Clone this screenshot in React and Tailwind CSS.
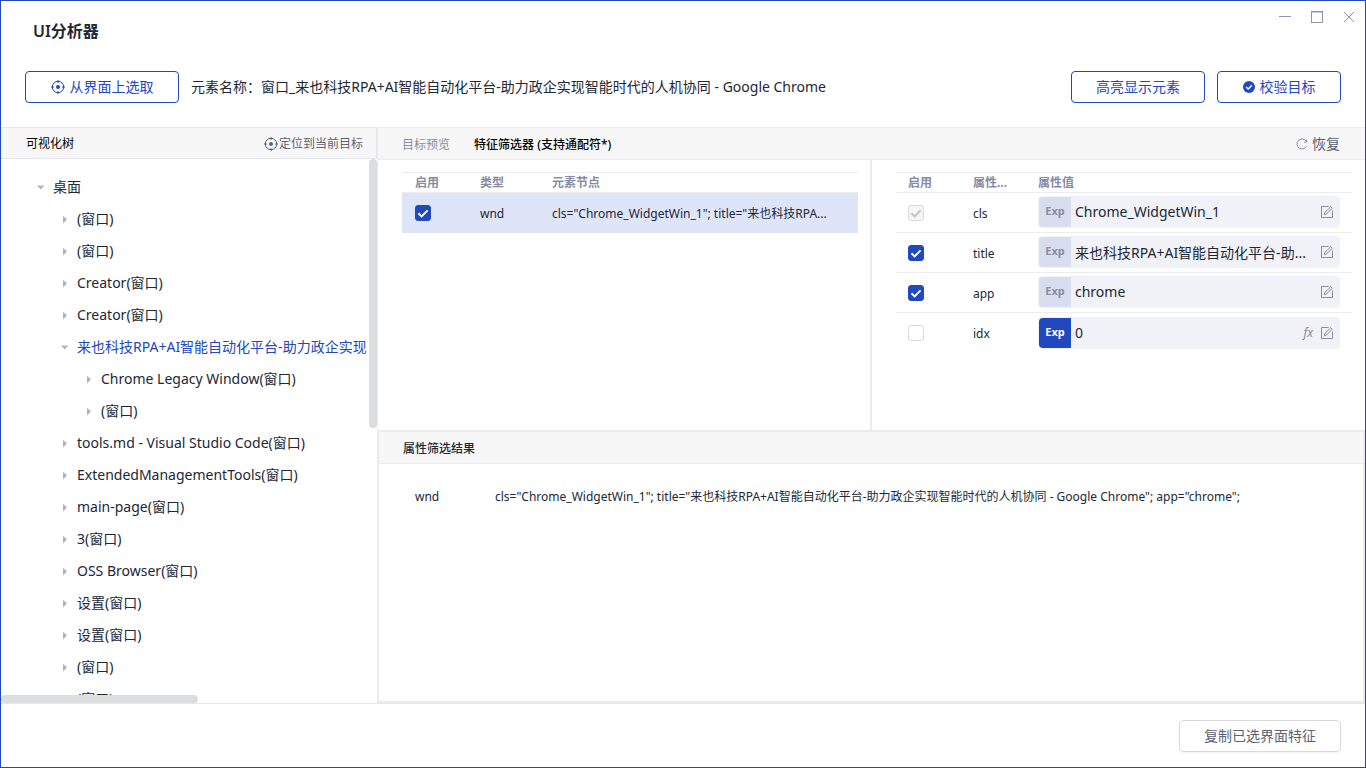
import { useState } from "react";

const treeNodes = [
  { level: 0, label: "桌面", open: true },
  { level: 1, label: "(窗口)" },
  { level: 1, label: "(窗口)" },
  { level: 1, label: "Creator(窗口)" },
  { level: 1, label: "Creator(窗口)" },
  {
    level: 1,
    label: "来也科技RPA+AI智能自动化平台-助力政企实现",
    open: true,
    active: true,
  },
  { level: 2, label: "Chrome Legacy Window(窗口)" },
  { level: 2, label: "(窗口)" },
  { level: 1, label: "tools.md - Visual Studio Code(窗口)" },
  { level: 1, label: "ExtendedManagementTools(窗口)" },
  { level: 1, label: "main-page(窗口)" },
  { level: 1, label: "3(窗口)" },
  { level: 1, label: "OSS Browser(窗口)" },
  { level: 1, label: "设置(窗口)" },
  { level: 1, label: "设置(窗口)" },
  { level: 1, label: "(窗口)" },
  { level: 1, label: "(窗口)" },
];

const indents = ["pl-[35px]", "pl-[59px]", "pl-[83px]"];

const initialAttrs = [
  { name: "cls", value: "Chrome_WidgetWin_1", checked: true, disabled: true },
  { name: "title", value: "来也科技RPA+AI智能自动化平台-助...", checked: true },
  { name: "app", value: "chrome", checked: true },
  { name: "idx", value: "0", checked: false, exp: true },
];

const TargetIcon = () => (
  <svg width="14" height="14" viewBox="0 0 14 14" fill="none" stroke="currentColor" aria-hidden="true">
    <circle cx="7" cy="7" r="5.7" />
    <circle cx="7" cy="7" r="2" fill="currentColor" stroke="none" />
    <path d="M7 0v3M7 11v3M0 7h3M11 7h3" />
  </svg>
);

const CheckCircleIcon = () => (
  <svg width="12" height="12" viewBox="0 0 12 12" fill="none" aria-hidden="true">
    <circle cx="6" cy="6" r="6" fill="currentColor" />
    <path d="M3.2 6.1l2 2L8.9 4.3" stroke="#fff" strokeWidth="1.4" />
  </svg>
);

const RefreshIcon = () => (
  <svg width="12" height="12" viewBox="0 0 12 12" fill="none" stroke="#858ca3" aria-hidden="true">
    <path d="M10.6 8A5 5 0 1 1 10 3" />
    <path d="M10.6 1.6v2.6H8.2" />
  </svg>
);

const EditIcon = () => (
  <svg width="12" height="12" viewBox="0 0 12 12" fill="none" stroke="#858ca3" aria-hidden="true">
    <path d="M7.5.5h-7v11h11v-7" />
    <path d="M3.4 8.6l.4-2L9.8.7l1.5 1.5-5.9 5.9z" />
  </svg>
);

const Caret = ({ open }) => (
  <svg width="9" height="9" viewBox="0 0 9 9" fill="#b0b5c6" aria-hidden="true">
    {open ? <path d="M1 2.5h7.5L4.8 6.5z" /> : <path d="M3 .5v8l4-4z" />}
  </svg>
);

const Checkbox = ({ label, checked, disabled, onChange }) => (
  <span className="grid size-4">
    <input
      type="checkbox"
      aria-label={label}
      checked={checked}
      disabled={disabled}
      onChange={onChange}
      className="peer col-start-1 row-start-1 size-4 appearance-none rounded-[3px] border border-[#d9d9d9] bg-white checked:border-[#2048bf] checked:bg-[#2048bf] disabled:border-[#d9d9d9] disabled:bg-[#f5f5f5]"
    />
    <svg
      viewBox="0 0 16 16"
      fill="none"
      strokeWidth="2"
      aria-hidden="true"
      className="pointer-events-none invisible col-start-1 row-start-1 size-4 stroke-white peer-checked:visible peer-disabled:stroke-[#c3c3c3]"
    >
      <path d="M3.4 8.2l3.2 3.2 6-6" />
    </svg>
  </span>
);

const WindowControls = () => (
  <div className="flex h-8 items-center justify-end gap-5 pr-[10px] text-[#8f96ab]">
    <button type="button" aria-label="最小化">
      <svg width="12" height="12" viewBox="0 0 12 12" stroke="currentColor">
        <path d="M0 5.5h12" />
      </svg>
    </button>
    <button type="button" aria-label="最大化">
      <svg width="12" height="12" viewBox="0 0 12 12" fill="none" stroke="currentColor">
        <rect x=".5" y=".5" width="11" height="11" />
        <path d="M0 1h12" />
      </svg>
    </button>
    <button type="button" aria-label="关闭">
      <svg width="12" height="12" viewBox="0 0 12 12" stroke="currentColor">
        <path d="M1 1l10 10M11 1L1 11" />
      </svg>
    </button>
  </div>
);

const Tree = () => (
  <aside className="flex w-[376px] shrink-0 flex-col">
    <div className="flex h-8 shrink-0 items-center justify-between border-y border-r border-[#e6e7ea] bg-[#f7f7f7] pt-0.5 pr-[13px] pl-[25px] text-xs">
      <h2 className="text-black">可视化树</h2>
      <button type="button" className="flex items-center gap-px text-[#5b6274]">
        <TargetIcon />
        定位到当前目标
      </button>
    </div>
    <div className="flex min-h-0 flex-1">
      <ul className="min-w-0 flex-1 overflow-hidden pt-3">
        {treeNodes.map((node, i) => (
          <li
            key={i}
            className={`flex h-8 items-center gap-2 whitespace-nowrap ${indents[node.level]} ${
              node.active ? "text-[#2048bf]" : "text-[#212735]"
            }`}
          >
            <span className="shrink-0">
              <Caret open={node.open} />
            </span>
            {node.label}
          </li>
        ))}
      </ul>
      <div className="w-2 shrink-0">
        <div className="h-[269px] rounded-full bg-[#dcdddf]" />
      </div>
    </div>
    <div className="h-2 shrink-0">
      <div className="h-2 w-[197px] rounded-full bg-[#dcdddf]" />
    </div>
  </aside>
);

const NodeTable = () => {
  const [enabled, setEnabled] = useState(true);

  return (
    <table className="w-full table-fixed text-left text-xs">
      <colgroup>
        <col className="w-[65px]" />
        <col className="w-[72px]" />
        <col />
      </colgroup>
      <thead>
        <tr className="h-5 border-y border-[#ededed] text-[#858ca3]">
          <th className="pt-px pl-[13px] font-bold">启用</th>
          <th className="pt-px pl-[13px] font-bold">类型</th>
          <th className="pt-px pl-[13px] font-bold">元素节点</th>
        </tr>
      </thead>
      <tbody>
        <tr className="h-10 bg-[#dfe5f9] text-[#212735]">
          <td className="pl-[13px]">
            <Checkbox
              label="启用 wnd"
              checked={enabled}
              onChange={() => setEnabled(!enabled)}
            />
          </td>
          <td className="pt-0.5 pl-[13px]">wnd</td>
          <td className="overflow-hidden pt-0.5 pl-[13px] whitespace-nowrap">
            cls="Chrome_WidgetWin_1"; title="来也科技RPA...
          </td>
        </tr>
      </tbody>
    </table>
  );
};

const AttrTable = () => {
  const [attrs, setAttrs] = useState(initialAttrs);

  const update = (name, changes) => {
    setAttrs(attrs.map((a) => (a.name === name ? { ...a, ...changes } : a)));
  };

  return (
    <table className="w-full table-fixed text-left text-xs">
      <colgroup>
        <col className="w-[65px]" />
        <col className="w-[65px]" />
        <col />
      </colgroup>
      <thead>
        <tr className="h-5 border-y border-[#ededed] text-[#858ca3]">
          <th className="pt-px pl-3 font-bold">启用</th>
          <th className="pt-px pl-3 font-bold">属性...</th>
          <th className="pt-px pl-3 font-bold">属性值</th>
        </tr>
      </thead>
      <tbody>
        {attrs.map((attr) => (
          <tr
            key={attr.name}
            className="group h-10 border-b border-[#ededed] text-[#212735] last:border-0"
          >
            <td className="pl-3">
              <Checkbox
                label={`启用 ${attr.name}`}
                checked={attr.checked}
                disabled={attr.disabled}
                onChange={() => update(attr.name, { checked: !attr.checked })}
              />
            </td>
            <td className="pt-0.5 pl-3">{attr.name}</td>
            <td className="pr-3 pb-0.5 pl-3 group-last:pb-0">
              <div className="flex h-8 items-center rounded-sm bg-[#f1f2f7] pr-[7px] pl-px">
                <button
                  type="button"
                  className={`h-[30px] w-8 shrink-0 rounded-l-sm text-[11px] font-bold ${
                    attr.exp
                      ? "bg-[#2048bf] text-white"
                      : "bg-[#d9deee] text-[#858ca3]"
                  }`}
                >
                  Exp
                </button>
                <input
                  type="text"
                  aria-label={attr.name}
                  value={attr.value}
                  onChange={(e) => update(attr.name, { value: e.target.value })}
                  className="h-8 min-w-0 flex-1 bg-transparent pl-1 text-sm outline-none"
                />
                {attr.exp && (
                  <button
                    type="button"
                    className="mr-2 text-xs text-[#858ca3] italic"
                  >
                    fx
                  </button>
                )}
                <button type="button" aria-label={`编辑 ${attr.name}`}>
                  <EditIcon />
                </button>
              </div>
            </td>
          </tr>
        ))}
      </tbody>
    </table>
  );
};

const App = () => {
  return (
    <div className="flex h-screen flex-col border border-[#2048bf] bg-white font-['Noto_Sans','Noto_Sans_CJK_SC',sans-serif] text-sm text-[#212735]">
      <header className="h-[126px] shrink-0">
        <WindowControls />
        <h1 className="-mt-4 pl-8 text-base leading-7 font-semibold">UI分析器</h1>
        <div className="mt-[26px] flex items-center gap-3 px-6">
          <button
            type="button"
            className="flex h-8 w-[154px] items-center justify-center gap-[5px] rounded-sm border border-[#2048bf] text-[#2048bf]"
          >
            <TargetIcon />
            从界面上选取
          </button>
          <p className="min-w-0 flex-1 truncate">
            元素名称：窗口_来也科技RPA+AI智能自动化平台-助力政企实现智能时代的人机协同 - Google Chrome
          </p>
          <button
            type="button"
            className="h-8 w-[134px] rounded-sm border border-[#2048bf] text-[#2048bf]"
          >
            高亮显示元素
          </button>
          <button
            type="button"
            className="flex h-8 w-[124px] items-center justify-center gap-[5px] rounded-sm border border-[#2048bf] text-[#2048bf]"
          >
            <CheckCircleIcon />
            校验目标
          </button>
        </div>
      </header>

      <div className="flex min-h-0 flex-1">
        <Tree />
        <main className="flex min-w-0 flex-1 flex-col border-l border-[#ebebed]">
          <div className="flex h-[33px] shrink-0 items-center border-y border-[#ededed] bg-[#f7f7f7] pr-[25px] pl-6">
            <nav className="flex flex-1 gap-6 pt-0.5 text-xs">
              <button type="button" className="text-[#858ca3]">
                目标预览
              </button>
              <button type="button" className="font-medium text-black">
                特征筛选器 (支持通配符*)
              </button>
            </nav>
            <button type="button" className="flex items-center gap-1 text-[#5b6274]">
              <RefreshIcon />
              恢复
            </button>
          </div>

          <div className="flex h-[270px] shrink-0 pr-1.5">
            <section className="min-w-0 flex-1 pt-3 pr-3 pl-6">
              <NodeTable />
            </section>
            <section className="min-w-0 flex-1 border-l-2 border-[#ebebed] pt-3 pr-[7px] pl-6">
              <AttrTable />
            </section>
          </div>

          <section className="flex-1 border-2 border-l border-[#ebebed]">
            <h2 className="flex h-8 items-center border-b border-[#ededed] bg-[#f7f7f7] pt-0.5 pl-6 text-xs font-medium">
              属性筛选结果
            </h2>
            <dl className="flex pt-[25px] pl-9 text-xs leading-4">
              <dt className="w-20 shrink-0">wnd</dt>
              <dd>
                cls="Chrome_WidgetWin_1"; title="来也科技RPA+AI智能自动化平台-助力政企实现智能时代的人机协同 - Google Chrome"; app="chrome";
              </dd>
            </dl>
          </section>
        </main>
      </div>

      <footer className="flex h-16 shrink-0 items-center justify-end border-t border-[#e6e7ea] pr-6">
        <button
          type="button"
          className="h-8 w-[162px] rounded-sm border border-[#d9d9d9] text-[#5b6274] shadow-xs"
        >
          复制已选界面特征
        </button>
      </footer>
    </div>
  );
};

export default App;
